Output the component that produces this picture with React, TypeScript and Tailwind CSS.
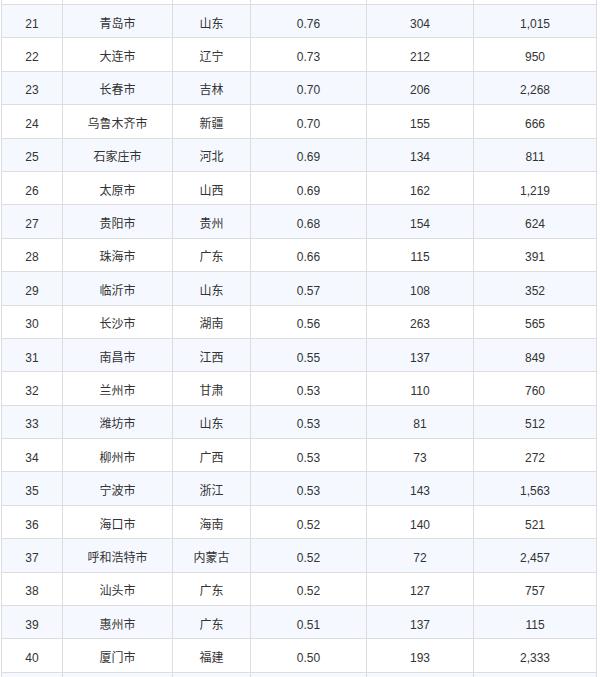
import React from "react";

const rows: [string, string, string, string, string, string][] = [
  ["21", "青岛市", "山东", "0.76", "304", "1,015"],
  ["22", "大连市", "辽宁", "0.73", "212", "950"],
  ["23", "长春市", "吉林", "0.70", "206", "2,268"],
  ["24", "乌鲁木齐市", "新疆", "0.70", "155", "666"],
  ["25", "石家庄市", "河北", "0.69", "134", "811"],
  ["26", "太原市", "山西", "0.69", "162", "1,219"],
  ["27", "贵阳市", "贵州", "0.68", "154", "624"],
  ["28", "珠海市", "广东", "0.66", "115", "391"],
  ["29", "临沂市", "山东", "0.57", "108", "352"],
  ["30", "长沙市", "湖南", "0.56", "263", "565"],
  ["31", "南昌市", "江西", "0.55", "137", "849"],
  ["32", "兰州市", "甘肃", "0.53", "110", "760"],
  ["33", "潍坊市", "山东", "0.53", "81", "512"],
  ["34", "柳州市", "广西", "0.53", "73", "272"],
  ["35", "宁波市", "浙江", "0.53", "143", "1,563"],
  ["36", "海口市", "海南", "0.52", "140", "521"],
  ["37", "呼和浩特市", "内蒙古", "0.52", "72", "2,457"],
  ["38", "汕头市", "广东", "0.52", "127", "757"],
  ["39", "惠州市", "广东", "0.51", "137", "115"],
  ["40", "厦门市", "福建", "0.50", "193", "2,333"],
];

const widths = ["w-[61px]", "w-[110px]", "w-[78px]", "w-[116px]", "w-[107px]", "w-[123px]"];

function Row({ cells, stripe }: { cells: string[]; stripe: boolean }) {
  return (
    <tr className={`h-[33.4px] ${stripe ? "bg-[#f5f9ff]" : "bg-white"}`}>
      {cells.map((c, i) => (
        <td
          key={i}
          className="border border-[#dddddd] text-center align-middle p-0 pt-[5px] text-[12px] leading-[16px] text-[#333]"
        >
          {c}
        </td>
      ))}
    </tr>
  );
}

export default function App() {
  return (
    <div
      className="w-[600px] h-[677px] overflow-hidden bg-white"
      style={{ fontFamily: '"Liberation Sans", "Noto Sans CJK SC", sans-serif' }}
    >
      <table className="ml-px -mt-[29.4px] table-fixed border-collapse w-[596px]">
        <colgroup>
          {widths.map((w, i) => (
            <col key={i} className={w} />
          ))}
        </colgroup>
        <tbody>
          <Row cells={["", "", "", "", "", ""]} stripe={false} />
          {rows.map((r, i) => (
            <Row key={r[0]} cells={r} stripe={i % 2 === 0} />
          ))}
          <Row cells={["", "", "", "", "", ""]} stripe={true} />
        </tbody>
      </table>
    </div>
  );
}
